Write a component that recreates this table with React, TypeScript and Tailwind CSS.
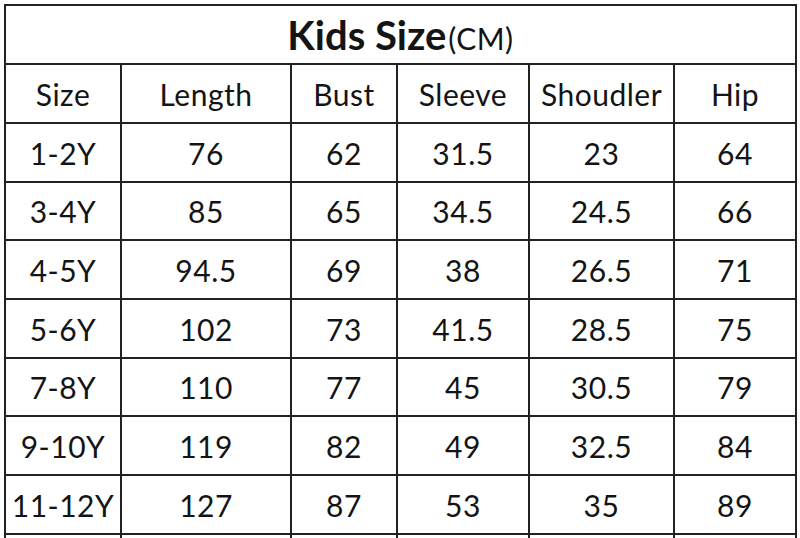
import React from 'react'

const headers = ['Size', 'Length', 'Bust', 'Sleeve', 'Shoudler', 'Hip']

const rows = [
  ['1-2Y', '76', '62', '31.5', '23', '64'],
  ['3-4Y', '85', '65', '34.5', '24.5', '66'],
  ['4-5Y', '94.5', '69', '38', '26.5', '71'],
  ['5-6Y', '102', '73', '41.5', '28.5', '75'],
  ['7-8Y', '110', '77', '45', '30.5', '79'],
  ['9-10Y', '119', '82', '49', '32.5', '84'],
  ['11-12Y', '127', '87', '53', '35', '89'],
]

// row heights measured from the chart (line to line)
const heights = ['h-[59px]', 'h-[58px]', 'h-[59px]', 'h-[59px]', 'h-[58px]', 'h-[59px]', 'h-[59px]']

const cell = 'border-2 border-[#222] text-center align-middle p-0'

export default function App() {
  return (
    <div
      className="w-[800px] h-[538px] overflow-hidden bg-white pt-[4px] pl-[4px] text-[#141414]"
      style={{ fontFamily: 'Lato, "Open Sans", sans-serif' }}
    >
      <table className="border-collapse table-fixed w-[791px] text-[30px] tracking-[0.5px] leading-none">
        <colgroup>
          <col className="w-[116px]" />
          <col className="w-[170px]" />
          <col className="w-[106px]" />
          <col className="w-[132px]" />
          <col className="w-[145px]" />
          <col className="w-[122px]" />
        </colgroup>
        <tbody>
          <tr className="h-[59px]">
            <td colSpan={6} className={cell}>
              <span className="font-bold text-[40px] tracking-normal pr-[2px]">Kids Size</span>
              <span className="text-[30px]">(CM)</span>
            </td>
          </tr>
          <tr className="h-[59px]">
            {headers.map(h => (
              <td key={h} className={cell}>{h}</td>
            ))}
          </tr>
          {rows.map((r, i) => (
            <tr key={r[0]} className={heights[i]}>
              {r.map((v, j) => (
                <td key={j} className={cell}>{v}</td>
              ))}
            </tr>
          ))}
          <tr className="h-[40px]">
            {headers.map(h => (
              <td key={h} className={cell}></td>
            ))}
          </tr>
        </tbody>
      </table>
    </div>
  )
}
